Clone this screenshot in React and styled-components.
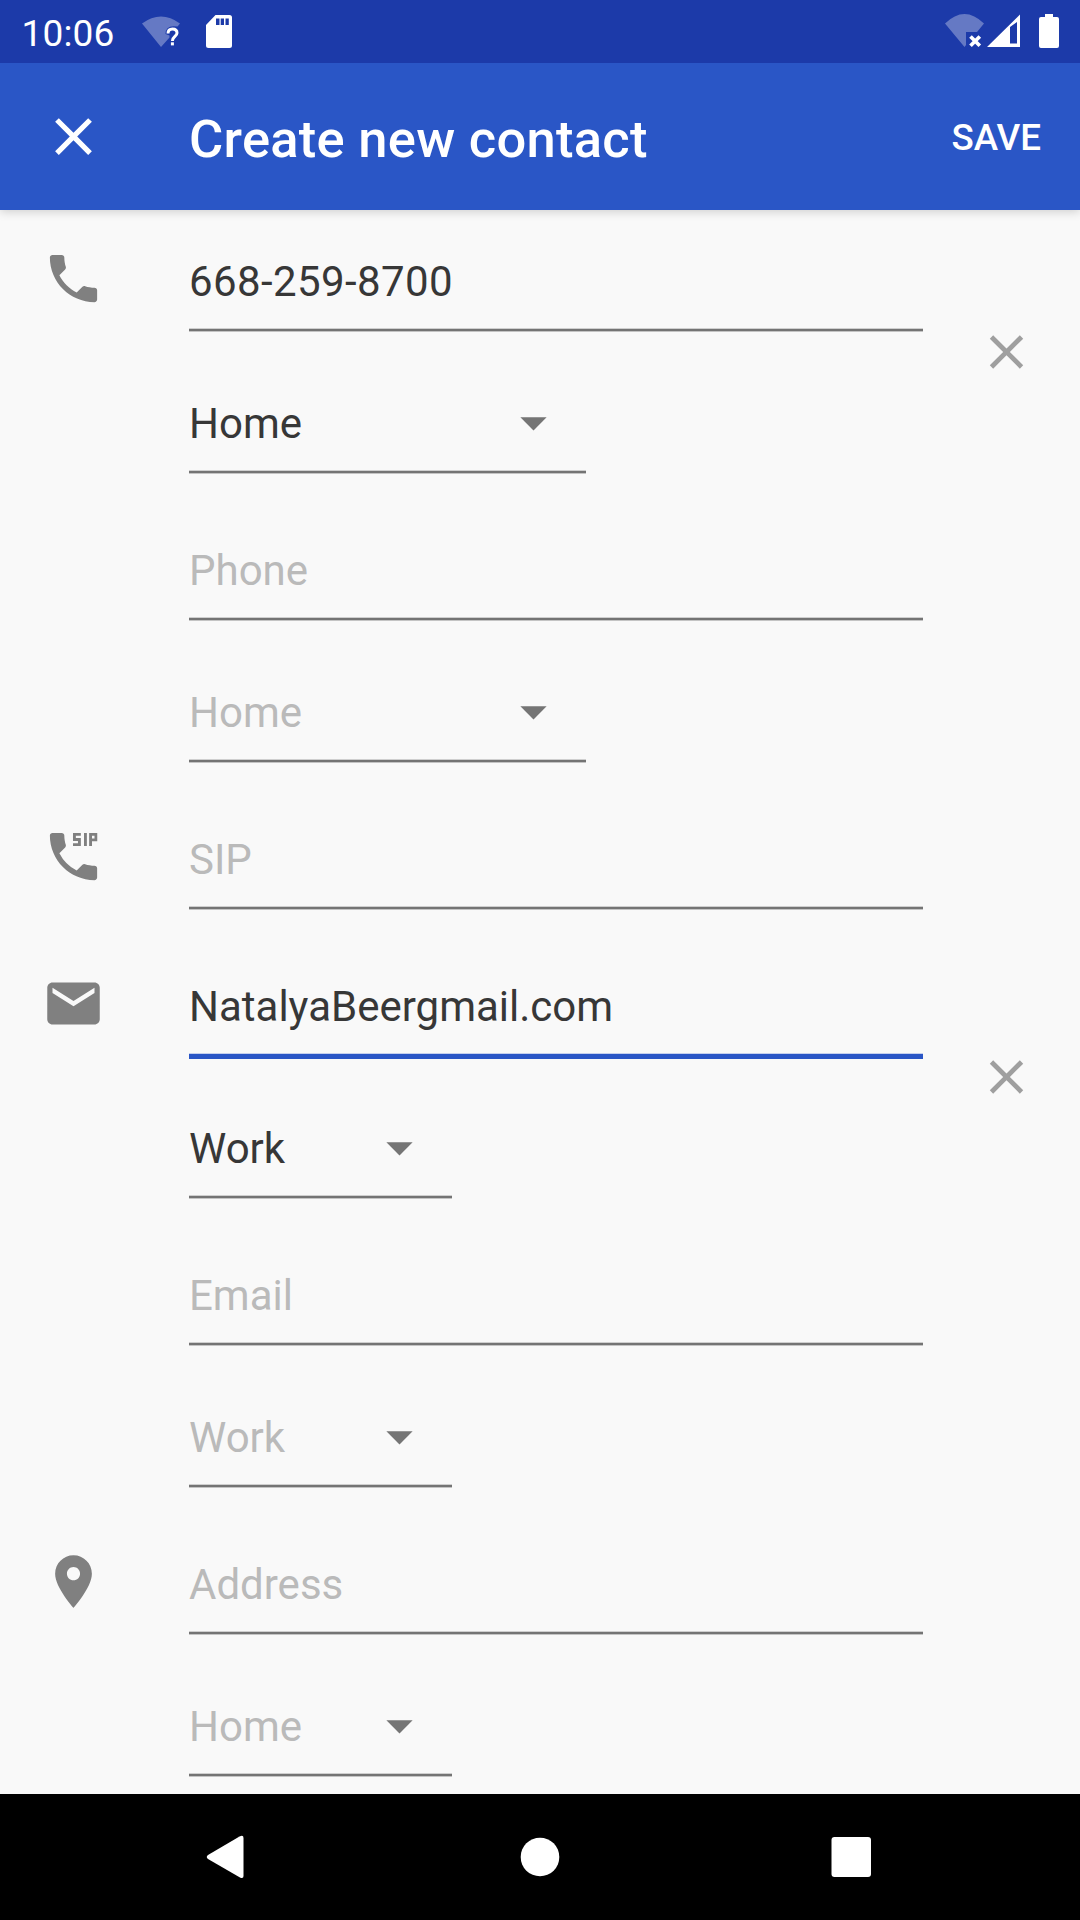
import React from "react";
import styled, { createGlobalStyle } from "styled-components";

const GlobalStyle = createGlobalStyle`
  * { box-sizing: border-box; }
  body { margin: 0; background: #f9f9f9; font-family: Roboto, "Liberation Sans", sans-serif; }
`;

const Screen = styled.div`
  display: flex;
  flex-direction: column;
  width: 1080px;
  height: 1920px;
  overflow: hidden;
  background: #f9f9f9;
`;

const StatusBar = styled.div`
  display: flex;
  justify-content: space-between;
  flex: none;
  height: 63px;
  padding-left: 21.5px;
  background: #1c3aa9;
  color: #fff;
`;

const StatusGroup = styled.div`
  display: flex;
`;

const Clock = styled.span`
  width: 108.5px;
  font-size: 37px;
  letter-spacing: 0.15px;
  line-height: 67px;
  white-space: nowrap;
`;

const Toolbar = styled.header`
  display: flex;
  align-items: center;
  flex: none;
  z-index: 1;
  height: 147px;
  padding: 0 39px 0 42px;
  background: #2a56c6;
  color: #fff;
  box-shadow: 0 2px 9px rgba(0, 0, 0, 0.17);
  clip-path: inset(0 0 -20px 0);
`;

const IconButton = styled.button`
  display: flex;
  width: 63px;
  height: 63px;
  padding: 0;
  border: 0;
  background: none;
  color: inherit;
`;

const Title = styled.h1`
  flex: 1;
  margin: 4px 0 0 84px;
  font-size: 52.5px;
  font-weight: 500;
  letter-spacing: 0.27px;
  line-height: 64px;
`;

const SaveButton = styled.button`
  margin-top: 2px;
  padding: 0;
  border: 0;
  background: none;
  color: inherit;
  font: 500 36.75px/44px Roboto, sans-serif;
`;

const Form = styled.main`
  display: flex;
  flex-direction: column;
  flex: 1;
  gap: 37px;
  padding-top: 12px;
`;

const Section = styled.section`
  display: grid;
  grid-template-columns: 189px 1fr;
`;

const SectionIcon = styled.div`
  padding: 25px 0 0 42px;
  height: 88px;
  color: #808080;
`;

const Entries = styled.div`
  display: flex;
  flex-direction: column;
  gap: 37px;
`;

const Entry = styled.div`
  display: flex;
  justify-content: space-between;
  padding-right: 42px;
`;

const Fields = styled.div`
  display: flex;
  flex-direction: column;
  gap: 32px;
`;

const Field = styled.div`
  display: flex;
  flex-direction: column;
  justify-content: flex-end;
  width: ${(p) => p.$width}px;
  height: 110px;
  color: ${(p) => (p.$filled ? "#373737" : "#bababa")};
`;

const FieldBody = styled.div`
  display: flex;
  justify-content: space-between;
  padding-right: 21px;
  height: 71px;
  font-size: 42px;
  letter-spacing: ${(p) => (p.$numeric ? "0.4px" : "normal")};
  line-height: 50px;
`;

const Underline = styled.div`
  flex: none;
  height: 4px;
  background: linear-gradient(#cfcfcf 1px, #747474 1px 3px, #c4c4c4 3px);
  ${(p) => p.$focused && "height: 6px; margin-bottom: -2px; background: linear-gradient(#c5d0ee 1px, #2a56c6 1px);"}
`;

const CaretBox = styled.div`
  height: 63px;
  margin-top: -8px;
  color: #757575;
`;

const Remove = styled(IconButton)`
  margin-top: 98px;
  color: #9f9f9f;
`;

const NavBar = styled.nav`
  display: flex;
  align-items: center;
  justify-content: space-between;
  flex: none;
  height: 126px;
  padding: 0 199px 0 195px;
  background: #000;
`;

const ICONS = {
  close: "M19 6.41L17.59 5 12 10.59 6.41 5 5 6.41 10.59 12 5 17.59 6.41 19 12 13.41 17.59 19 19 17.59 13.41 12z",
  phone: "M6.62 10.79c1.44 2.83 3.76 5.14 6.59 6.59l2.2-2.2c.27-.27.67-.36 1.02-.24 1.12.37 2.33.57 3.57.57.55 0 1 .45 1 1V20c0 .55-.45 1-1 1-9.39 0-17-7.61-17-17 0-.55.45-1 1-1h3.5c.55 0 1 .45 1 1 0 1.25.2 2.45.57 3.57.11.35.03.74-.25 1.02l-2.2 2.2z",
  sip: "M11.8 3H14.800V4.050H12.900V4.950H14.800V8H11.8V6.950H13.700V6.050H11.800zM16 3h1.100v5H16zM17.950 3H21.050V6.150H19.050V8H17.950zM19.050 4.050V5.100H20V4.050zM20 15.5c-1.25 0-2.45-.2-3.57-.57a1.02 1.02 0 0 0-1.02.24l-2.2 2.2a15.045 15.045 0 0 1-6.59-6.59l2.2-2.21c.27-.26.35-.65.24-1C8.7 6.45 8.5 5.25 8.5 4c0-.55-.45-1-1-1H4c-.55 0-1 .45-1 1 0 9.39 7.61 17 17 17 .55 0 1-.45 1-1v-3.5c0-.55-.45-1-1-1z",
  mail: "M20 4H4c-1.1 0-1.99.9-1.99 2L2 18c0 1.1.9 2 2 2h16c1.1 0 2-.9 2-2V6c0-1.1-.9-2-2-2zm0 4l-8 5-8-5V6l8 5 8-5v2z",
  place: "M12 2C8.13 2 5 5.13 5 9c0 5.25 7 13 7 13s7-7.75 7-13c0-3.87-3.13-7-7-7zm0 9.5c-1.38 0-2.5-1.12-2.5-2.5s1.12-2.5 2.5-2.5 2.5 1.12 2.5 2.5-1.12 2.5-2.5 2.5z",
  caret: "M7 10l5 5 5-5z",
};

const Icon = ({ name, viewBox = "0 0 24 24" }) => (
  <svg width="63" height="63" viewBox={viewBox} fill="currentColor" display="block">
    <path d={ICONS[name]} />
  </svg>
);

const NotificationIcons = () => (
  <svg width="115" height="63" viewBox="130 0 115 63" fill="#fff">
    <path opacity=".32" d="M142 23.5Q161 9.500 180 23.500L177.500 26.500Q165.500 24.500 165.500 34L169.500 35.500V37.500L161 47z" />
    <path d="M168 33.500Q168 29 172.500 29T177 33C177 36.500 172.400 36.500 172.400 41" fill="none" stroke="#fff" strokeWidth="3" />
    <path d="M170.900 42.300h3v3.100h-3z" />
    <path fillRule="evenodd" d="M215.500 15H229.500Q232 15 232 17.500V45.500Q232 48 229.500 48H208.500Q206 48 206 45.500V25zM216 18.500V25H219.500V18.500zM220.700 18.500V25H224V18.500zM225.500 18.500V25H228.800V18.500z" />
  </svg>
);

const SystemIcons = () => (
  <svg width="150" height="63" viewBox="930 0 150 63" fill="#fff">
    <path opacity=".32" d="M945 23.500Q964.500 4.500 984 23.500L977 32H966V45L964.500 47z" />
    <path d="M970.500 36.500L979.800 45.800M979.800 36.500L970.500 45.800" stroke="#fff" strokeWidth="3.700" />
    <path fillRule="evenodd" d="M1020 14.500V47H987zM1010 27V43.500H1017V22z" />
    <path d="M1045 14h8v3h4q2 0 2 2v27q0 2-2 2h-16q-2 0-2-2V19q0-2 2-2h4z" />
  </svg>
);

const SECTIONS = [
  { icon: "phone", entries: [
    { text: "668-259-8700", numeric: true, filled: true, type: "Home", typeWidth: 397 },
    { text: "Phone", type: "Home", typeWidth: 397 },
  ] },
  { icon: "sip", entries: [{ text: "SIP" }] },
  { icon: "mail", entries: [
    { text: "NatalyaBeergmail.com", filled: true, focused: true, type: "Work", typeWidth: 263 },
    { text: "Email", type: "Work", typeWidth: 263 },
  ] },
  { icon: "place", entries: [{ text: "Address", type: "Home", typeWidth: 263 }] },
];

const ContactEntry = ({ text, numeric, filled, focused, type, typeWidth }) => (
  <Entry>
    <Fields>
      <Field $width={734} $filled={filled}>
        <FieldBody $numeric={numeric}>{text}</FieldBody>
        <Underline $focused={focused} />
      </Field>
      {type && (
        <Field $width={typeWidth} $filled={filled}>
          <FieldBody>
            {type}
            <CaretBox><Icon name="caret" /></CaretBox>
          </FieldBody>
          <Underline />
        </Field>
      )}
    </Fields>
    {filled && (
      <Remove aria-label="Delete">
        <Icon name="close" viewBox="-1.200 -1.400 26.400 26.400" />
      </Remove>
    )}
  </Entry>
);

export default function App() {
  return (
    <Screen>
      <GlobalStyle />
      <StatusBar>
        <StatusGroup>
          <Clock>10:06</Clock>
          <NotificationIcons />
        </StatusGroup>
        <SystemIcons />
      </StatusBar>
      <Toolbar>
        <IconButton aria-label="Close"><Icon name="close" /></IconButton>
        <Title>Create new contact</Title>
        <SaveButton>SAVE</SaveButton>
      </Toolbar>
      <Form>
        {SECTIONS.map((section) => (
          <Section key={section.icon}>
            <SectionIcon><Icon name={section.icon} /></SectionIcon>
            <Entries>
              {section.entries.map((entry) => <ContactEntry key={entry.text} {...entry} />)}
            </Entries>
          </Section>
        ))}
      </Form>
      <NavBar>
        <svg width="60" height="60" viewBox="195 1827 60 60" fill="#fff">
          <path d="M208 1855L239.500 1836.500Q243.500 1834.500 243.500 1838V1876Q243.500 1879 240 1877.500L208 1859Q205.500 1857 208 1855z" />
        </svg>
        <svg width="60" height="60" viewBox="508 1827 60 60" fill="#fff">
          <circle cx="540" cy="1857" r="19.300" />
        </svg>
        <svg width="60" height="60" viewBox="821 1827 60 60" fill="#fff">
          <rect x="831.500" y="1837" width="39.500" height="40" rx="3" />
        </svg>
      </NavBar>
    </Screen>
  );
}
